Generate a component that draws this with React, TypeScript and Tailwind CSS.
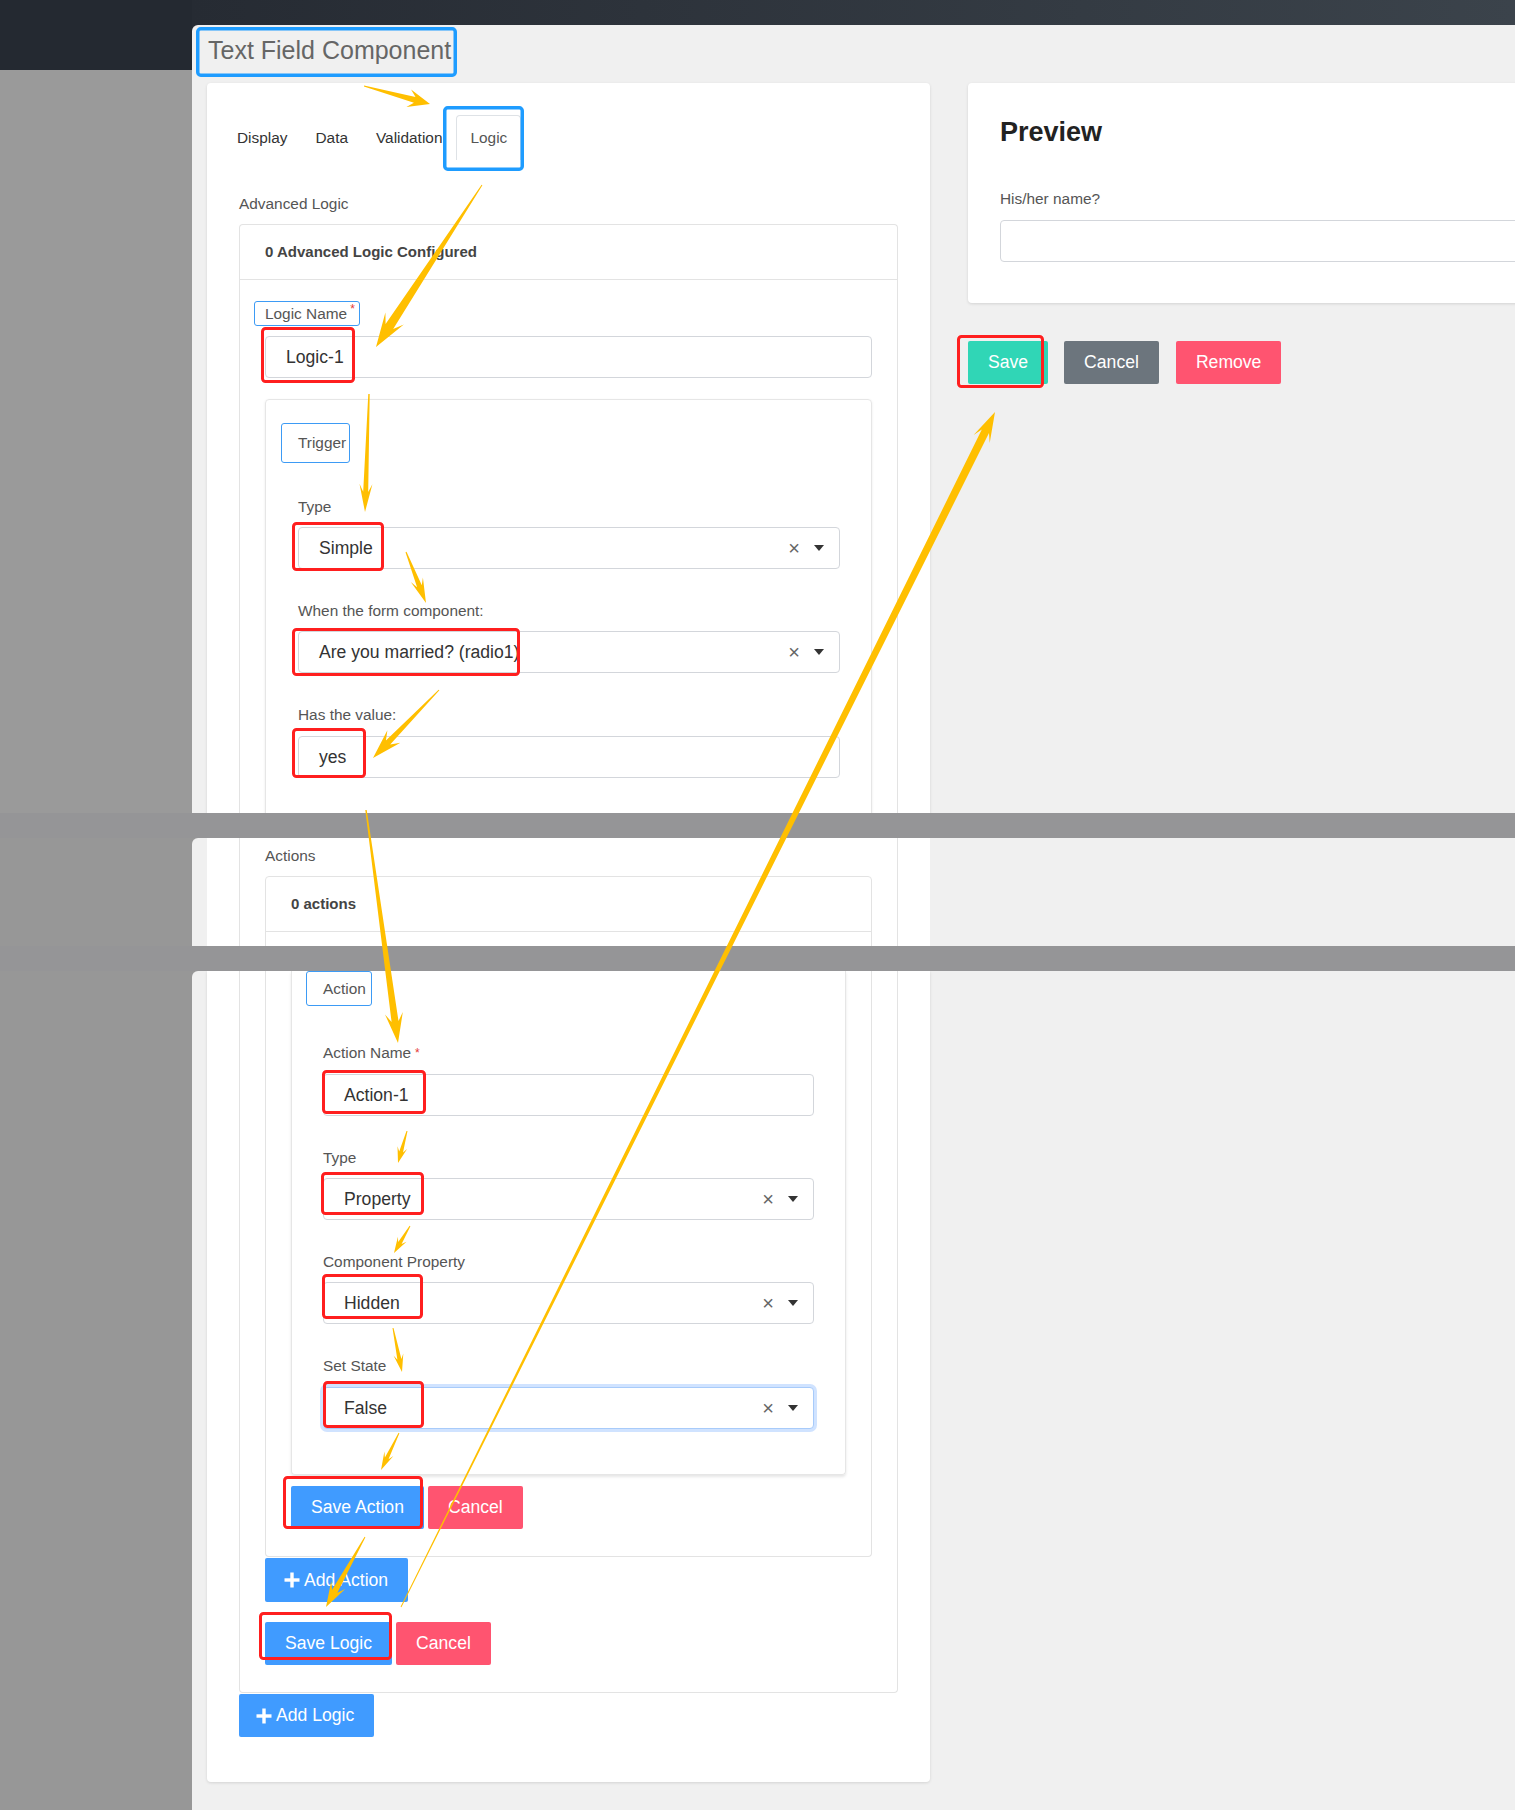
import React from 'react'

type Pt = [number, number]

// tapered annotation arrow: thin tail, wider shaft, swept head
function arrowPoints(tail: Pt, tip: Pt, w0: number, w1: number, L: number, W: number) {
  const dx = tip[0] - tail[0]
  const dy = tip[1] - tail[1]
  const len = Math.hypot(dx, dy)
  const ux = dx / len
  const uy = dy / len
  const nx = -uy
  const ny = ux
  const at = (d: number, w: number): Pt => [tip[0] - ux * d + nx * w, tip[1] - uy * d + ny * w]
  const pts: Pt[] = [
    [tail[0] + nx * w0 / 2, tail[1] + ny * w0 / 2],
    at(L * 0.72, w1 / 2),
    at(L, W / 2),
    tip,
    at(L, -W / 2),
    at(L * 0.72, -w1 / 2),
    [tail[0] - nx * w0 / 2, tail[1] - ny * w0 / 2],
  ]
  return pts.map((p) => `${p[0].toFixed(1)},${p[1].toFixed(1)}`).join(' ')
}

const arrows: { a: Pt; b: Pt; w0: number; w1: number; L: number; W: number }[] = [
  { a: [364, 86], b: [430, 104], w0: 1, w1: 6, L: 22, W: 18 },
  { a: [482, 185], b: [376, 347], w0: 1, w1: 9, L: 34, W: 22 },
  { a: [369, 394], b: [365, 512], w0: 1.5, w1: 5, L: 28, W: 13 },
  { a: [406, 552], b: [426, 603], w0: 1, w1: 5, L: 25, W: 13 },
  { a: [439, 690], b: [373, 758], w0: 1, w1: 6, L: 30, W: 18 },
  { a: [366, 810], b: [398, 1043], w0: 1.5, w1: 7, L: 30, W: 18 },
  { a: [407, 1131], b: [398, 1163], w0: 1, w1: 4, L: 16, W: 10 },
  { a: [410, 1226], b: [394, 1253], w0: 1, w1: 4, L: 16, W: 10 },
  { a: [393, 1328], b: [402, 1372], w0: 1, w1: 4, L: 18, W: 10 },
  { a: [399, 1433], b: [381, 1470], w0: 1, w1: 4, L: 18, W: 10 },
  { a: [365, 1537], b: [326, 1607], w0: 1, w1: 6, L: 25, W: 16 },
  { a: [401, 1607], b: [995, 412], w0: 1, w1: 8, L: 30, W: 18 },
]

// [x1, y1, x2, y2] outer bounds
const redBoxes = [
  [261, 327, 355, 383],
  [292, 522, 384, 571],
  [292, 628, 520, 676],
  [292, 728, 366, 778],
  [957, 335, 1044, 388],
  [322, 1070, 426, 1114],
  [321, 1172, 424, 1215],
  [322, 1274, 423, 1319],
  [323, 1381, 424, 1428],
  [283, 1476, 423, 1529],
  [259, 1612, 392, 1660],
]

const blueBoxes = [
  [196, 27, 457, 77],
  [443, 106, 524, 171],
]

function Annotations() {
  return (
    <svg className="pointer-events-none absolute left-0 top-0" width={1515} height={1810} viewBox="0 0 1515 1810">
      {blueBoxes.map(([x1, y1, x2, y2], i) => (
        <rect key={i} x={x1 + 1.75} y={y1 + 1.75} width={x2 - x1 - 3.5} height={y2 - y1 - 3.5} rx={3} fill="none" stroke="#1e9cff" strokeWidth={3.5} />
      ))}
      {redBoxes.map(([x1, y1, x2, y2], i) => (
        <rect key={i} x={x1 + 1.5} y={y1 + 1.5} width={x2 - x1 - 3} height={y2 - y1 - 3} rx={3} fill="none" stroke="#ff1f1f" strokeWidth={3} />
      ))}
      {arrows.map((ar, i) => (
        <polygon key={i} points={arrowPoints(ar.a, ar.b, ar.w0, ar.w1, ar.L, ar.W)} fill="#ffbf00" />
      ))}
    </svg>
  )
}

function Label({ children, required }: { children: React.ReactNode; required?: boolean }) {
  return (
    <div className="text-[15.4px] leading-[20px] text-[#555]">
      {children}
      {required && <span className="ml-[4px] align-top text-[12px] text-[#e53935]">*</span>}
    </div>
  )
}

function Input({ value, full }: { value?: string; full?: boolean }) {
  return (
    <div className={`flex h-[42px] items-center rounded-[4px] border border-[#d3d6db] bg-white pl-[20px] text-[17.6px] text-[#333] ${full ? 'w-[700px]' : ''}`}>
      {value}
    </div>
  )
}

function Select({ value, focused }: { value: string; focused?: boolean }) {
  return (
    <div
      className={`flex h-[42px] items-center rounded-[4px] border bg-white pl-[20px] pr-[15px] text-[17.6px] text-[#333] ${
        focused ? 'border-[#a8cbfa] ring-[3px] ring-[#d0e3ff]' : 'border-[#d3d6db]'
      }`}
    >
      <span>{value}</span>
      <span className="ml-auto text-[20px] leading-none font-light text-[#666]">×</span>
      <span className="ml-[14px] h-0 w-0 border-l-[5px] border-r-[5px] border-t-[6px] border-l-transparent border-r-transparent border-t-[#333]" />
    </div>
  )
}

function Legend({ children, className }: { children: React.ReactNode; className: string }) {
  return (
    <div className={`inline-flex items-center rounded-[3px] border border-[#3d9bf5] pl-[16px] text-[15.4px] text-[#555] ${className}`}>
      {children}
    </div>
  )
}

function Btn({ children, color, className = '' }: { children: React.ReactNode; color: string; className?: string }) {
  return (
    <div className={`flex h-[43px] items-center justify-center rounded-[2px] px-[20px] text-[17.6px] text-white ${color} ${className}`}>
      {children}
    </div>
  )
}

function PlusIcon() {
  return (
    <svg width="16" height="16" viewBox="0 0 16 16" className="mr-[4px]">
      <rect x="6.3" y="0.5" width="3.4" height="15" fill="white" />
      <rect x="0.5" y="6.3" width="15" height="3.4" fill="white" />
    </svg>
  )
}

export default function App() {
  return (
    <div className="relative h-[1810px] w-[1515px] overflow-hidden bg-[#979797] font-['Liberation_Sans',Arial,sans-serif]">
      {/* top slice */}
      <div className="flex h-[813px]">
        <div className="flex w-[192px] shrink-0 flex-col">
          <div className="h-[70px] bg-[#242931]" />
          <div className="flex-1 bg-[#9a9a9a]" />
        </div>
        <div className="flex min-w-0 flex-1 flex-col bg-[#262b33]">
          <div className="h-[25px] bg-gradient-to-r from-[#262b33] to-[#3b434b]" />
          <div className="flex-1 overflow-hidden rounded-tl-[6px] bg-[#f0f0f0]">
            <div className="flex h-[58px] items-center pb-[6px] pl-[16px] text-[25px] text-[#666]">Text Field Component</div>
            <div className="flex items-start gap-[38px]">
              <div className="ml-[15px] h-[800px] w-[723px] shrink-0 rounded-[4px] bg-white shadow-[0_1px_3px_rgba(0,0,0,0.12)]">
                <div className="flex pl-[16px] pt-[32px] text-[15.4px] text-[#333]">
                  <div className="flex h-[45px] items-center px-[14px]">Display</div>
                  <div className="flex h-[45px] items-center px-[14px]">Data</div>
                  <div className="flex h-[45px] items-center px-[14px]">Validation</div>
                  <div className="flex h-[45px] items-center rounded-t-[4px] border border-b-0 border-[#dee2e6] px-[13px] text-[#555]">Logic</div>
                </div>
                <div className="px-[32px]">
                  <div className="mt-[34px]">
                    <Label>Advanced Logic</Label>
                  </div>
                  <div className="mt-[10px] rounded-t-[4px] border border-b-0 border-[#e3e3e3]">
                    <div className="flex h-[55px] items-center border-b border-[#e3e3e3] pl-[25px] text-[15px] font-bold text-[#444]">
                      0 Advanced Logic Configured
                    </div>
                    <div className="px-[25px] pt-[21px]">
                      <div className="-ml-[11px] inline-flex h-[25px] items-center rounded-[3px] border border-[#3d9bf5] pl-[10px] pr-[4px] text-[15.4px] text-[#555]">
                        Logic Name<span className="ml-[3px] self-start text-[12px] leading-[14px] text-[#e53935]">*</span>
                      </div>
                      <div className="mt-[10px]">
                        <Input value="Logic-1" />
                      </div>
                      <div className="mt-[21px] h-[500px] rounded-[4px] border border-[#e6e6e6] pl-[32px] pr-[31px] pt-[23px] shadow-[0_1px_3px_rgba(0,0,0,0.08)]">
                        <Legend className="-ml-[17px] h-[40px] w-[69px]">Trigger</Legend>
                        <div className="mt-[34px]">
                          <Label>Type</Label>
                        </div>
                        <div className="mt-[10px]">
                          <Select value="Simple" />
                        </div>
                        <div className="mt-[32px]">
                          <Label>When the form component:</Label>
                        </div>
                        <div className="mt-[10px]">
                          <Select value="Are you married? (radio1)" />
                        </div>
                        <div className="mt-[32px]">
                          <Label>Has the value:</Label>
                        </div>
                        <div className="mt-[11px]">
                          <Input value="yes" />
                        </div>
                      </div>
                    </div>
                  </div>
                </div>
              </div>

              <div className="w-[700px] shrink-0">
                <div className="h-[220px] rounded-[4px] bg-white pl-[32px] pt-[33px] shadow-[0_1px_3px_rgba(0,0,0,0.12)]">
                  <div className="text-[27px] font-bold leading-[32px] text-[#222]">Preview</div>
                  <div className="mt-[41px]">
                    <Label>His/her name?</Label>
                  </div>
                  <div className="mt-[11px]">
                    <Input full />
                  </div>
                </div>
                <div className="mt-[38px] flex gap-[16px]">
                  <Btn color="bg-[#30d6b6]">Save</Btn>
                  <Btn color="bg-[#6c757d]">Cancel</Btn>
                  <Btn color="bg-[#ff5470]" className="ml-[1px]">Remove</Btn>
                </div>
              </div>
            </div>
          </div>
        </div>
      </div>

      <div className="h-[25px] bg-[#959597]" />

      {/* middle slice */}
      <div className="flex h-[108px]">
        <div className="w-[192px] shrink-0" />
        <div className="flex-1 overflow-hidden rounded-tl-[6px] bg-[#f0f0f0]">
          <div className="ml-[15px] h-full w-[723px] bg-white px-[32px]">
            <div className="h-full border-x border-[#e3e3e3] px-[25px] pt-[8px]">
              <Label>Actions</Label>
              <div className="mt-[10px] h-[200px] rounded-t-[4px] border border-[#e3e3e3]">
                <div className="flex h-[55px] items-center border-b border-[#e3e3e3] pl-[25px] text-[15px] font-bold text-[#444]">0 actions</div>
              </div>
            </div>
          </div>
        </div>
      </div>

      <div className="h-[25px] bg-[#959597]" />

      {/* bottom slice */}
      <div className="flex h-[839px]">
        <div className="w-[192px] shrink-0" />
        <div className="flex-1 overflow-hidden rounded-tl-[6px] bg-[#f0f0f0]">
          <div className="ml-[15px] w-[723px] rounded-b-[4px] bg-white px-[32px] pb-[45px] shadow-[0_1px_3px_rgba(0,0,0,0.12)]">
            <div className="rounded-b-[4px] border-x border-b border-[#e3e3e3] px-[25px] pb-[27px]">
              <div className="rounded-b-[4px] border-x border-b border-[#e3e3e3] pl-[25px] pr-[25px] pb-[27px]">
                <div className="rounded-b-[4px] border-x border-b border-[#e6e6e6] pb-[45px] pl-[31px] pr-[31px] shadow-[0_2px_3px_rgba(0,0,0,0.1)]">
                  <Legend className="-ml-[17px] h-[35px] w-[66px]">Action</Legend>
                  <div className="mt-[37px]">
                    <Label required>Action Name</Label>
                  </div>
                  <div className="mt-[11px]">
                    <Input value="Action-1" />
                  </div>
                  <div className="mt-[32px]">
                    <Label>Type</Label>
                  </div>
                  <div className="mt-[10px]">
                    <Select value="Property" />
                  </div>
                  <div className="mt-[32px]">
                    <Label>Component Property</Label>
                  </div>
                  <div className="mt-[10px]">
                    <Select value="Hidden" />
                  </div>
                  <div className="mt-[32px]">
                    <Label>Set State</Label>
                  </div>
                  <div className="mt-[11px]">
                    <Select value="False" focused />
                  </div>
                </div>
                <div className="mt-[11px] flex gap-[4px]">
                  <Btn color="bg-[#409bff]">Save Action</Btn>
                  <Btn color="bg-[#ff5470]">Cancel</Btn>
                </div>
              </div>
              <div className="mt-[1px] flex">
                <Btn color="bg-[#409bff]" className="h-[44px] pl-[19px]">
                  <PlusIcon />
                  Add Action
                </Btn>
              </div>
              <div className="mt-[20px] flex gap-[4px]">
                <Btn color="bg-[#409bff]">Save Logic</Btn>
                <Btn color="bg-[#ff5470]">Cancel</Btn>
              </div>
            </div>
            <div className="mt-[1px] flex">
              <Btn color="bg-[#409bff]" className="pl-[17px]">
                <PlusIcon />
                Add Logic
              </Btn>
            </div>
          </div>
        </div>
      </div>

      <Annotations />
    </div>
  )
}
